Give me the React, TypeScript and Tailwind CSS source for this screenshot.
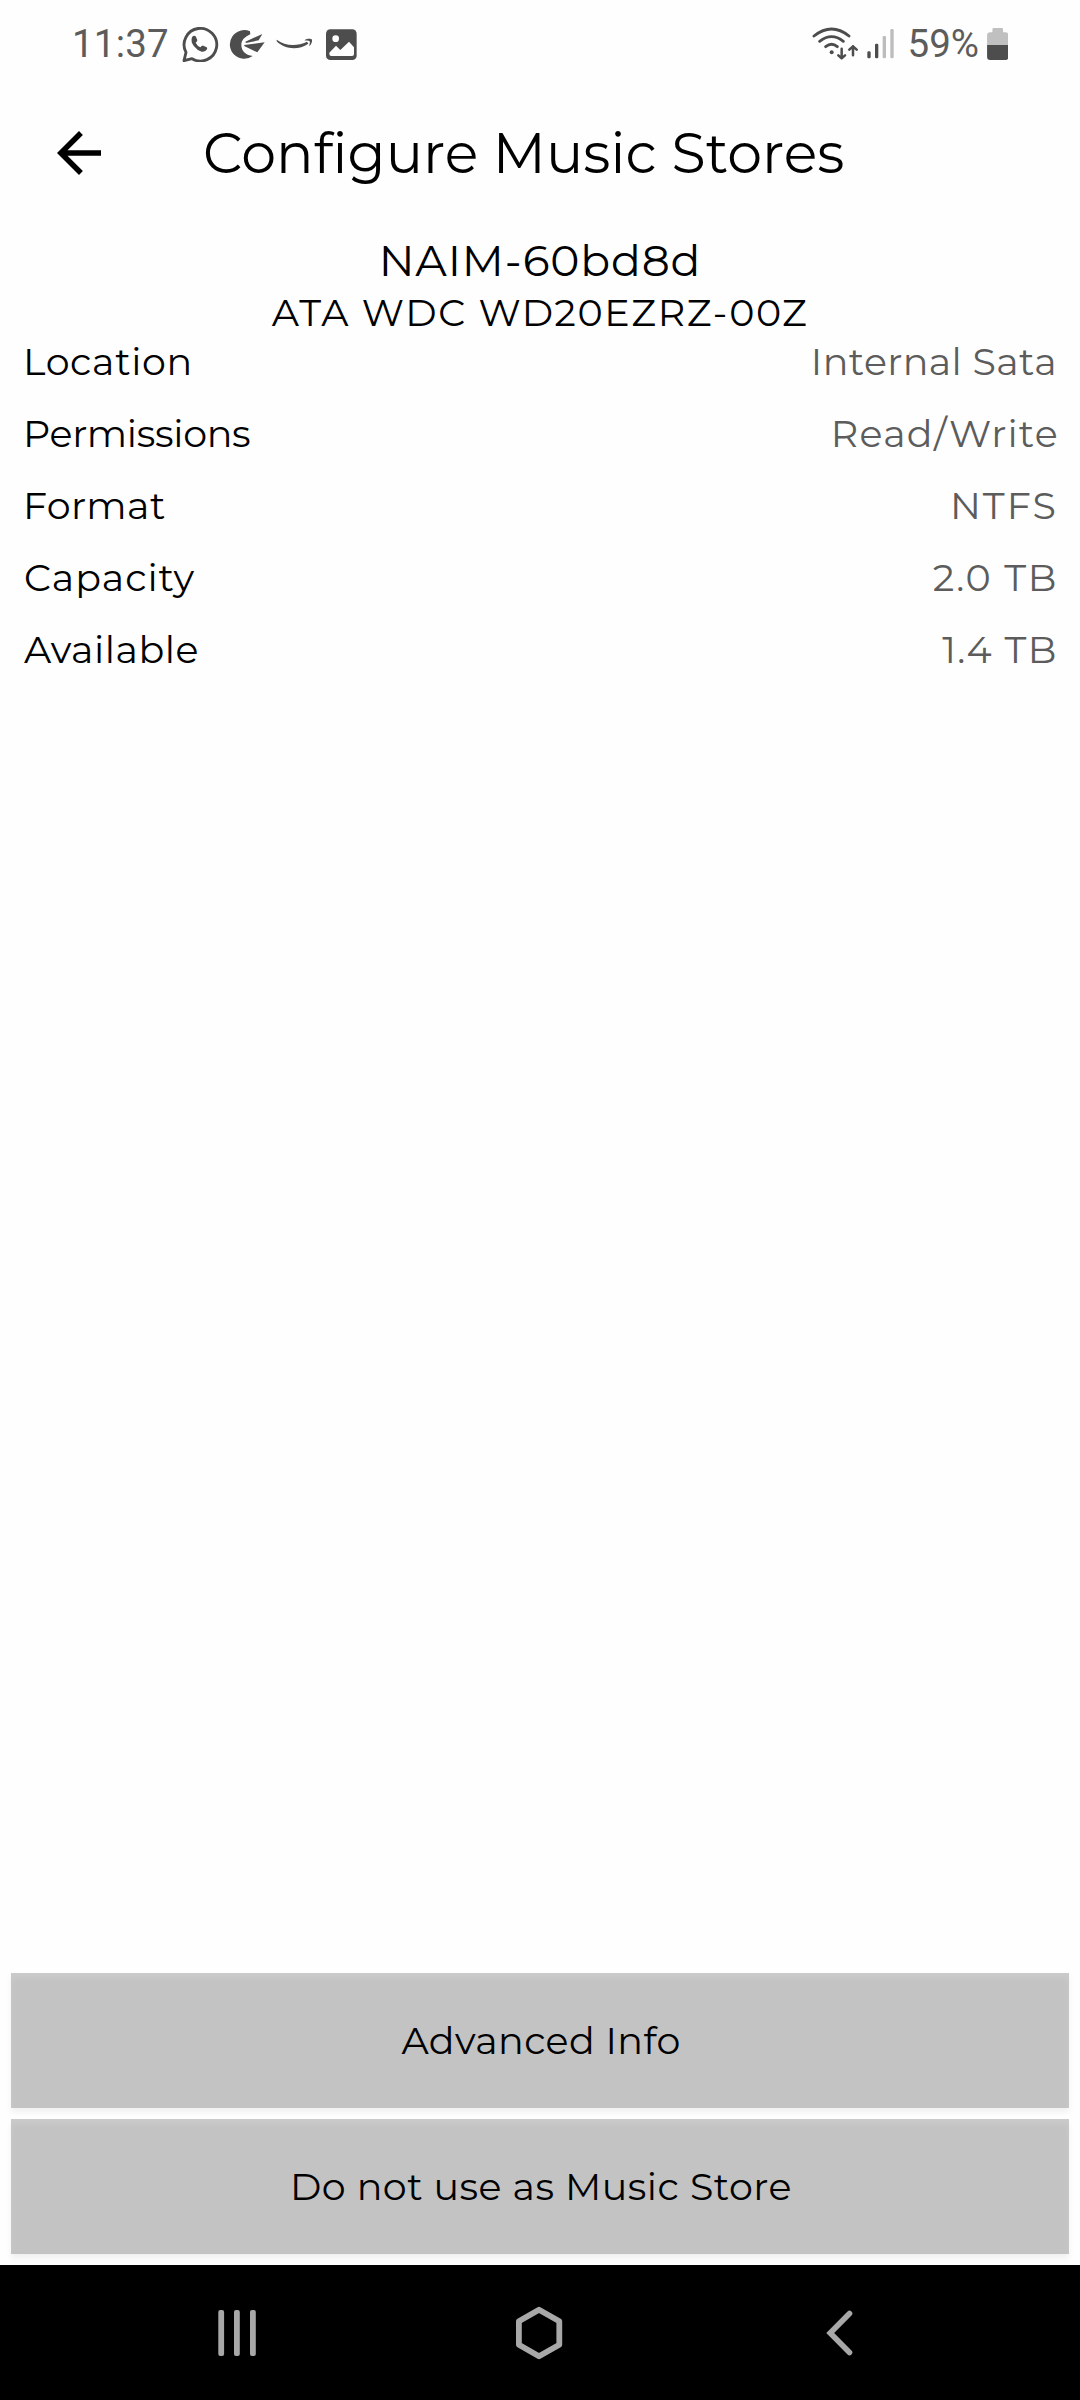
const details = [
  { label: "Location", value: "Internal Sata", labelClass: "tracking-[0.6px]", valueClass: "tracking-[0.4px] mr-[1px]" },
  { label: "Permissions", value: "Read/Write", labelClass: "tracking-[-0.3px]", valueClass: "tracking-[1.3px] -mr-[1px]" },
  { label: "Format", value: "NTFS", labelClass: "tracking-[0.4px]", valueClass: "tracking-[2px]" },
  { label: "Capacity", value: "2.0 TB", labelClass: "tracking-[1.05px] ml-[1px]", valueClass: "tracking-[1.7px]" },
  { label: "Available", value: "1.4 TB", labelClass: "tracking-[0.5px] ml-[1px]", valueClass: "tracking-[1.5px]" },
];

const actions = [
  { label: "Advanced Info", className: "tracking-[0.4px] pl-[2px] pt-[1px]" },
  { label: "Do not use as Music Store", className: "tracking-[0.5px] pl-[2px] pt-[1px]" },
];

const WhatsAppIcon = () => (
  <svg viewBox="36 33 111 108" className="w-[37px] h-[36px]">
    <path
      d="M42 137 L48 112 A49 49 0 1 1 66 131 Z"
      fill="none"
      stroke="#4d4d4d"
      strokeWidth="8.5"
      strokeLinejoin="round"
    />
    <path
      d="M66 67q5-7 11-3l5 11q1 4-5 8 5 10 14 14 5-6 9-5l10 5q3 2 1 6-5 9-16 7-14-4-23-16-11-14-6-27z"
      fill="#4d4d4d"
    />
  </svg>
);

const CrescentIcon = () => (
  <svg viewBox="177 33 111 108" className="w-[37px] h-[36px]" fill="#4d4d4d">
    <path d="M240 49A43 43 0 1 0 248 123C230 121 214 110 214 90C214 74 225 66 241 58Z" />
    <path d="M226 80L277 57L266 76L228 84Z" />
    <path d="M222 90L284 82L262 112L224 94Z" />
  </svg>
);

const SmileIcon = () => (
  <svg viewBox="33 33 111 108" className="w-[37px] h-[36px]" fill="#4d4d4d">
    <path d="M35 74C60 93 95 95 126 80L130 86C100 107 60 104 35 79Z" />
    <path d="M118 76C128 70 138 71 141 74C142 80 139 88 133 94C133 88 136 83 134 79C130 76 124 78 118 76Z" />
  </svg>
);

const PhotoIcon = () => (
  <svg viewBox="180 33 99 108" className="w-[33px] h-[36px]">
    <rect x="183" y="43" width="92" height="92" rx="13" fill="#4d4d4d" />
    <circle cx="212" cy="71" r="10" fill="#fefefe" />
    <path d="M193 113L213 92L226 105L252 80L267 97V117Q267 123 261 123H199Q193 123 193 117Z" fill="#fefefe" />
  </svg>
);

const WifiIcon = () => (
  <svg
    viewBox="21 33 138 108"
    className="w-[46px] h-[36px]"
    fill="none"
    stroke="#4d4d4d"
    strokeWidth="8.5"
    strokeLinecap="round"
    strokeLinejoin="round"
  >
    <path d="M27 63Q80 21 132 63M44 79Q80 51 115 79M62 95Q80 81 97 95" />
    <circle cx="80" cy="112" r="6" fill="#4d4d4d" stroke="none" />
    <path d="M110 101V130M100 121L110 130L120 121M144 121V94M133 104L144 94L155 104" strokeWidth="7.5" />
  </svg>
);

const SignalIcon = () => (
  <svg viewBox="186 33 81 108" className="w-[27px] h-[36px]">
    <rect x="187" y="109" width="10" height="21" rx="4" fill="#4d4d4d" />
    <rect x="210" y="86" width="10" height="44" rx="4" fill="#4d4d4d" />
    <rect x="233" y="63" width="10" height="67" rx="4" fill="#bcbcbc" />
    <rect x="256" y="42" width="10" height="88" rx="4" fill="#bcbcbc" />
  </svg>
);

const BatteryIcon = () => (
  <svg viewBox="591 48 64 108" className="w-[21.5px] h-[36px]">
    <path d="M607 58Q607 54 611 54H635Q639 54 639 58V67H646Q655 67 655 76V105H591V76Q591 67 600 67H607Z" fill="#c0c0c0" />
    <path d="M591 105H655V141Q655 150 646 150H600Q591 150 591 141Z" fill="#4d4d4d" />
  </svg>
);

const StatusBar = () => (
  <div className="h-[88px] flex items-center justify-between pl-[72px] pr-[72px] font-['Roboto',sans-serif] text-[38.5px] leading-none text-[#5c5c5c]">
    <div className="flex items-center">
      <span className="w-[110px] tracking-[0.2px]">11:37</span>
      <WhatsAppIcon />
      <div className="w-[10px]" />
      <CrescentIcon />
      <div className="w-[10px]" />
      <SmileIcon />
      <div className="w-[12px]" />
      <PhotoIcon />
    </div>
    <div className="flex items-center">
      <WifiIcon />
      <div className="w-[9px]" />
      <SignalIcon />
      <span className="ml-[14px] w-[79px]">59%</span>
      <BatteryIcon />
    </div>
  </div>
);

const NavBar = () => (
  <nav className="h-[135px] bg-black flex items-center justify-between pl-[218px] pr-[227px]">
    <svg viewBox="0 0 38 46" className="w-[38px] h-[46px]" fill="#a8a8a8">
      <rect x="0.3" width="5.8" height="46" rx="2" />
      <rect x="16" width="5.8" height="46" rx="2" />
      <rect x="32" width="5.8" height="46" rx="2" />
    </svg>
    <svg viewBox="0 0 48 54" className="w-[48px] h-[54px] -ml-[4px]">
      <path
        d="M24 3.7L44.3 15.2V38.8L24 50.3L3.9 38.8V15.2Z"
        fill="none"
        stroke="#a8a8a8"
        strokeWidth="5.8"
        strokeLinejoin="round"
      />
    </svg>
    <svg viewBox="0 0 27 46" className="w-[27px] h-[46px]">
      <path d="M23.5 3.5L4.2 23L23.5 42.5" fill="none" stroke="#a8a8a8" strokeWidth="5.6" strokeLinecap="round" />
    </svg>
  </nav>
);

const App = () => {
  return (
    <div className="w-[1080px] h-[2400px] flex flex-col bg-[#fefefe] text-black font-['Montserrat','Inter',sans-serif] overflow-hidden">
      <StatusBar />

      {/* Header */}
      <header className="h-[130px] flex items-center pl-[46px]">
        <svg viewBox="0 0 24 24" className="w-[66px] h-[66px] shrink-0">
          <path d="M20 11H7.83l5.59-5.59L12 4l-8 8 8 8 1.41-1.41L7.83 13H20v-2z" />
        </svg>
        <h1 className="ml-[91px] pt-[2px] text-[55.5px] leading-none whitespace-nowrap tracking-[0.08px]">Configure Music Stores</h1>
      </header>

      {/* Drive info */}
      <main className="flex-1 pt-[14px]">
        <h2 className="text-center text-[44px] leading-[56px] tracking-[0.85px]">NAIM-60bd8d</h2>
        <p className="text-center text-[38px] leading-[49px] tracking-[1.65px]">ATA WDC WD20EZRZ-00Z</p>
        <dl className="flex flex-col gap-6 pt-px pl-[23px] pr-[22px] text-[38px] leading-[48px]">
          {details.map((row) => (
            <div key={row.label} className="flex justify-between">
              <dt className={row.labelClass}>{row.label}</dt>
              <dd className={`text-[#5c5c5c] ${row.valueClass}`}>{row.value}</dd>
            </div>
          ))}
        </dl>
      </main>

      {/* Actions */}
      <div className="flex flex-col gap-[11px] px-[11px] pb-[11px]">
        {actions.map((action) => (
          <button
            key={action.label}
            className="h-[135px] flex items-center justify-center bg-[#c3c3c3] text-[38px] leading-none shadow-[0_4px_6px_rgba(0,0,0,0.06),inset_0_5px_6px_rgba(255,255,255,0.14)]"
          >
            <span className={action.className}>{action.label}</span>
          </button>
        ))}
      </div>

      <NavBar />
    </div>
  );
};

export default App;
